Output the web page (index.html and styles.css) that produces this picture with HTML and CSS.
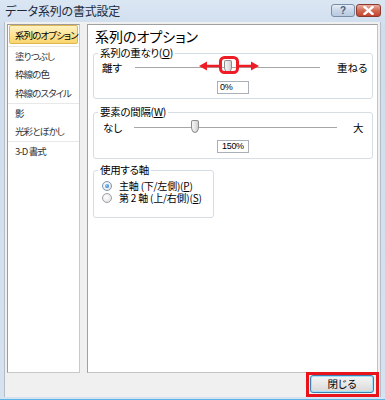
FILE: index.html
```html
<!DOCTYPE html>
<html lang="ja">
<head>
    <meta charset="UTF-8">
    <title>データ系列の書式設定</title>
    <link rel="stylesheet" href="styles.css">
</head>
<body>
    <div class="window">
        <div class="titlebar">
            <span class="title">データ系列の書式設定</span>
            <div class="caption-buttons">
                <span class="cap-btn help">?</span>
                <span class="cap-btn close">
                    <svg width="11" height="9" viewBox="0 0 11 9">
                        <path d="M1.5 1 L9.5 8 M9.5 1 L1.5 8" stroke="#fff" stroke-width="2.4" stroke-linecap="square"/>
                    </svg>
                </span>
            </div>
        </div>

        <div class="client">
            <div class="main">
                <ul class="nav">
                    <li class="selected">系列のオプション</li>
                    <li class="group">塗りつぶし</li>
                    <li>枠線の色</li>
                    <li>枠線のスタイル</li>
                    <li class="group">影</li>
                    <li>光彩とぼかし</li>
                    <li class="group">3-D 書式</li>
                </ul>

                <div class="panel">
                    <h2>系列のオプション</h2>

                    <fieldset class="box overlap">
                        <legend>系列の重なり(<u>O</u>)</legend>
                        <div class="slider-row">
                            <span class="end-label left">離す</span>
                            <div class="track">
                                <span class="thumb" style="left: 50%;"></span>
                                <!-- 赤い注釈（つまみの枠と左右の矢印） -->
                                <svg class="annot" width="62" height="22" viewBox="0 0 62 22">
                                    <rect x="22.5" y="3.5" width="17" height="15" rx="4" fill="none" stroke="#ee1c25" stroke-width="3"/>
                                    <path d="M7 12 H21 M41 12 H55" stroke="#ee1c25" stroke-width="2.5"/>
                                    <path d="M1 12 L9 7.5 L9 16.5 Z M61 12 L53 7.5 L53 16.5 Z" fill="#ee1c25"/>
                                </svg>
                            </div>
                            <span class="end-label right">重ねる</span>
                        </div>
                        <div class="value-row"><span class="value">0%</span></div>
                    </fieldset>

                    <fieldset class="box gap">
                        <legend>要素の間隔(<u>W</u>)</legend>
                        <div class="slider-row">
                            <span class="end-label left">なし</span>
                            <div class="track">
                                <span class="thumb" style="left: 30%;"></span>
                            </div>
                            <span class="end-label right">大</span>
                        </div>
                        <div class="value-row"><span class="value">150%</span></div>
                    </fieldset>

                    <fieldset class="box axis">
                        <legend>使用する軸</legend>
                        <label class="radio-row"><span class="radio checked"></span>主軸 (下/左側)(<u>P</u>)</label>
                        <label class="radio-row"><span class="radio"></span>第 2 軸 (上/右側)(<u>S</u>)</label>
                    </fieldset>
                </div>
            </div>

            <div class="footer">
                <span class="highlight"><button class="close-btn">閉じる</button></span>
            </div>
        </div>
    </div>
</body>
</html>
```

FILE: styles.css
```css
body {
    margin: 0;
    font-family: "Noto Sans CJK JP", "Liberation Sans", sans-serif;
    font-feature-settings: "palt";
    color: #000;
}

.window {
    width: 385px;
    height: 400px;
    box-sizing: border-box;
    padding: 0 4px 2px 4px;
    background: linear-gradient(#dbe6f3, #cfdded 30px, #d6e2ef);
    border-bottom: 1px solid #5ab4e6;
    display: flex;
    flex-direction: column;
}

.titlebar {
    height: 22px;
    display: flex;
    align-items: center;
    justify-content: space-between;
}

.title {
    font-size: 12px;
    line-height: 16px;
    padding-left: 1px;
    color: #1b2a3c;
    letter-spacing: -0.2px;
}

.caption-buttons {
    display: flex;
    gap: 1px;
    align-self: flex-start;
    margin-top: 4px;
}

.cap-btn {
    height: 13px;
    border-radius: 3px;
    display: flex;
    align-items: center;
    justify-content: center;
    box-sizing: border-box;
}

.help {
    width: 24px;
    border: 1px solid #7a8ca6;
    background: linear-gradient(#e6eef7, #c8d6e8 50%, #b8cae0);
    font-family: "Liberation Sans", sans-serif;
    font-weight: bold;
    font-size: 10px;
    color: #4b5d75;
}

.close {
    width: 25px;
    border: 1px solid #8a3a2e;
    background: linear-gradient(#eab0a3, #d26a55 50%, #c4432e);
}

.client {
    flex: 1;
    background: #f0f0f0;
    border-left: 1px solid #b4bcc6;
    border-right: 1px solid #b4bcc6;
    padding: 2px 2px 0 2px;
    display: flex;
    flex-direction: column;
}

.main {
    height: 349px;
    display: flex;
    gap: 7px;
}

.nav {
    width: 73px;
    box-sizing: border-box;
    margin: 0;
    padding: 0;
    list-style: none;
    background: #fff;
    border: 1px solid #9c9c9c;
    border-right-color: #c8c8c8;
    border-bottom-color: #c8c8c8;
}

.nav li {
    height: 19px;
    line-height: 18px;
    box-sizing: border-box;
    padding-left: 7px;
    font-size: 9.5px;
    letter-spacing: -0.9px;
    white-space: nowrap;
    color: #333;
}

.nav li.group {
    border-top: 1px solid #e8e8e8;
}

.nav li.selected {
    margin: 0 1px 2px 1px;
    padding-left: 5px;
    border: 1px solid #e2b64e;
    border-radius: 2px;
    background: linear-gradient(#fff3c4, #fde59a 45%, #f9d56f);
    color: #000;
}

.panel {
    flex: 1;
    box-sizing: border-box;
    background: #fff;
    border: 1px solid #a0a0a0;
    border-right-color: #c4c4c4;
    border-bottom-color: #c4c4c4;
    padding: 2px 4px 0 5px;
}

.panel h2 {
    margin: 0;
    padding-left: 2px;
    font-size: 14px;
    font-weight: normal;
    line-height: 19px;
}

.box {
    margin: 0;
    padding: 0;
    border: 1px solid #d5dde5;
    border-radius: 3px;
}

.box legend {
    margin-left: 4px;
    padding: 0 2px;
    font-size: 10.5px;
    line-height: 14px;
    letter-spacing: -0.3px;
}

.box.overlap {
    padding-bottom: 4px;
}

.box.gap {
    margin-top: 6px;
    padding-bottom: 5px;
}

.box.axis {
    width: 121px;
    box-sizing: border-box;
    margin-top: 4px;
    padding: 3px 0 13px 0;
}

.slider-row {
    height: 16px;
    display: flex;
    align-items: center;
    font-size: 10.5px;
}

.overlap .slider-row {
    padding: 0 9px 0 8px;
}

.gap .slider-row {
    margin-top: 1px;
    padding: 0 9px 0 9px;
}

.end-label {
    line-height: 14px;
    white-space: nowrap;
}

.overlap .left { width: 33px; }
.overlap .right { width: 26px; margin-left: 17px; }
.gap .left { width: 31px; }
.gap .right { width: 10px; margin-left: 16px; }

.track {
    flex: 1;
    height: 2px;
    position: relative;
    background: linear-gradient(#a7a7a7 50%, #ffffff 50%);
}

.thumb {
    position: absolute;
    top: -7px;
    width: 8px;
    height: 13px;
    margin-left: -4px;
    box-sizing: border-box;
    border: 1px solid #8d8d8d;
    border-radius: 2px 2px 4px 4px / 2px 2px 6px 6px;
    background: linear-gradient(90deg, #f6f6f6, #e2e2e2 60%, #cfcfcf);
}

.annot {
    position: absolute;
    left: 63px;
    top: -13px;
}

.value-row {
    display: flex;
    justify-content: center;
}

.overlap .value-row {
    margin-top: 5px;
}

.gap .value-row {
    margin-top: 4px;
}

.value {
    width: 32px;
    height: 13px;
    box-sizing: border-box;
    border: 1px solid #a9b0b8;
    background: #fff;
    font-family: "Liberation Sans", sans-serif;
    font-size: 9px;
    line-height: 11px;
    padding-left: 2px;
    letter-spacing: -0.3px;
}

.gap .value {
    padding-left: 4px;
}

.radio-row {
    height: 12px;
    display: flex;
    align-items: center;
    padding-left: 8px;
    font-size: 10px;
    line-height: 12px;
    letter-spacing: -0.2px;
    white-space: nowrap;
}

.radio {
    width: 10px;
    height: 10px;
    box-sizing: border-box;
    border-radius: 50%;
    border: 1px solid #9aa0a6;
    background: radial-gradient(circle at 40% 40%, #ffffff, #dcdcdc);
    margin-right: 7px;
    position: relative;
}

.radio.checked {
    border-color: #7b95b3;
}

.radio.checked::after {
    content: "";
    position: absolute;
    left: 2px;
    top: 2px;
    width: 4px;
    height: 4px;
    border-radius: 50%;
    background: radial-gradient(circle at 35% 35%, #8fd0ff, #1a63b0);
}

.footer {
    flex: 1;
    display: flex;
    justify-content: flex-end;
    align-items: flex-start;
}

.highlight {
    margin-top: -1px;
    margin-right: -1px;
    border: 3px solid #e8131b;
    padding: 0 2px 1px 1px;
    display: flex;
}

.close-btn {
    width: 64px;
    height: 18px;
    margin-top: 0;
    padding: 0;
    border: 1px solid #3c7fb1;
    border-radius: 3px;
    box-shadow: inset 0 0 0 1px #9fe0fb;
    background: linear-gradient(#f4f4f4, #e8e8e8 50%, #d8d8d8);
    font-family: "Noto Sans CJK JP", sans-serif;
    font-feature-settings: "palt";
    font-size: 10.5px;
    line-height: 14px;
    color: #000;
}
```
